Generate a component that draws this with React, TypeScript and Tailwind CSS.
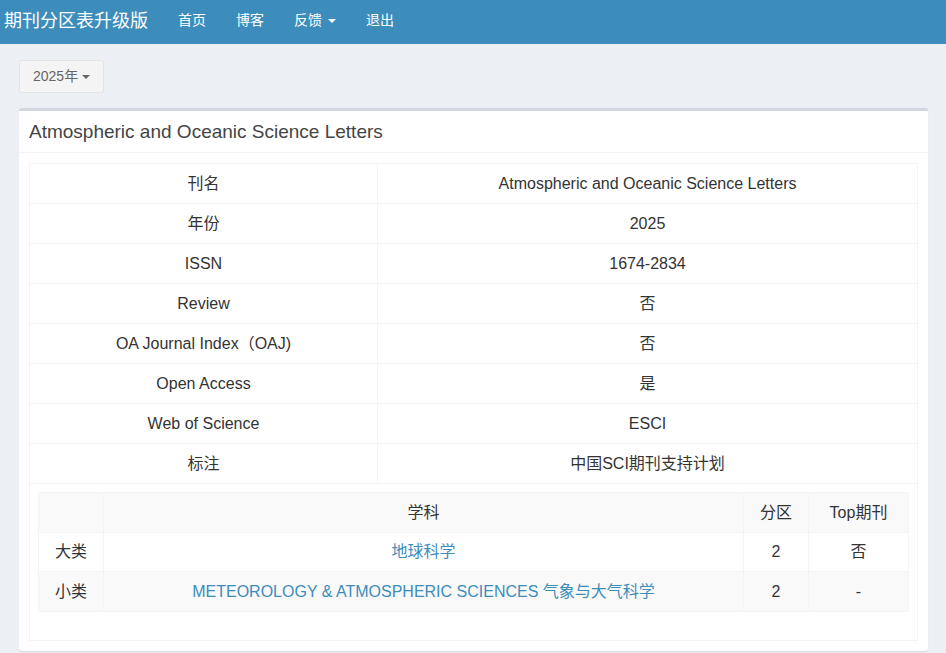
import React from "react";

const FONT = { fontFamily: '"Liberation Sans", Arial, "Noto Sans CJK SC", sans-serif' };

const rows: [string, string][] = [
  ["刊名", "Atmospheric and Oceanic Science Letters"],
  ["年份", "2025"],
  ["ISSN", "1674-2834"],
  ["Review", "否"],
  ["OA Journal Index（OAJ)", "否"],
  ["Open Access", "是"],
  ["Web of Science", "ESCI"],
  ["标注", "中国SCI期刊支持计划"],
];

function Caret({ color = "currentColor", gap = 3 }: { color?: string; gap?: number }) {
  return (
    <span
      className="inline-block align-middle w-0 h-0 border-t-[4px] border-x-[4px] border-x-transparent"
      style={{ borderTopColor: color, marginLeft: gap }}
    />
  );
}

export default function App() {
  return (
    <div className="min-h-[653px] bg-[#ecf0f5] text-[#333]" style={FONT}>
      {/* Navbar */}
      <div className="h-[44px] pb-[3px] bg-[#3c8dbc] flex items-center text-white">
        <div className="pl-[4px] pr-[15px] text-[18px] leading-none">期刊分区表升级版</div>
        <div className="flex items-center text-[14px]">
          <span className="px-[15px]">首页</span>
          <span className="px-[15px]">博客</span>
          <span className="px-[15px] flex items-center">反馈<Caret color="#fff" gap={6} /></span>
          <span className="px-[15px]">退出</span>
        </div>
      </div>

      <div className="px-[19px] pt-[16px]">
        <button className="h-[33px] px-[13px] bg-[#f4f4f4] border border-[#e3e3e3] rounded-[3px] text-[14px] text-[#666] flex items-center">
          2025年<Caret color="#666" gap={4} />
        </button>

        {/* Box */}
        <div className="mt-[15px] w-[909px] bg-white border-t-[3px] border-[#d2d6de] rounded-[3px] shadow-[0_1px_1px_rgba(0,0,0,0.1)]">
          <div className="h-[42px] px-[10px] flex items-center border-b border-[#f4f4f4]">
            <h3 className="text-[19px] text-[#444] leading-none">Atmospheric and Oceanic Science Letters</h3>
          </div>
          <div className="p-[10px]">
            <table className="w-full border border-[#f4f4f4] border-collapse text-[16px] text-center">
              <tbody>
                {rows.map(([k, v]) => (
                  <tr key={k} className="h-[40px]">
                    <td className="border border-[#f4f4f4] w-[348px]">{k}</td>
                    <td className="border border-[#f4f4f4]">{v}</td>
                  </tr>
                ))}
                <tr>
                  <td colSpan={2} className="border border-[#f4f4f4] px-[8px] pt-[8px] pb-[28px]">
                    <table className="w-full border-collapse">
                      <tbody>
                        <tr className="h-[40px] bg-[#f9f9f9]">
                          <td className="w-[65px] border border-[#f4f4f4]"></td>
                          <td className="border border-[#f4f4f4]">学科</td>
                          <td className="w-[65px] border border-[#f4f4f4]">分区</td>
                          <td className="w-[100px] border border-[#f4f4f4]">Top期刊</td>
                        </tr>
                        <tr className="h-[39px] bg-white">
                          <td className="border border-[#f4f4f4]">大类</td>
                          <td className="border border-[#f4f4f4] text-[#3c8dbc]">地球科学</td>
                          <td className="border border-[#f4f4f4]">2</td>
                          <td className="border border-[#f4f4f4]">否</td>
                        </tr>
                        <tr className="h-[40px] bg-[#f9f9f9]">
                          <td className="border border-[#f4f4f4]">小类</td>
                          <td className="border border-[#f4f4f4] text-[#3c8dbc]">METEOROLOGY &amp; ATMOSPHERIC SCIENCES 气象与大气科学</td>
                          <td className="border border-[#f4f4f4]">2</td>
                          <td className="border border-[#f4f4f4]">-</td>
                        </tr>
                      </tbody>
                    </table>
                  </td>
                </tr>
              </tbody>
            </table>
          </div>
        </div>
      </div>
    </div>
  );
}
